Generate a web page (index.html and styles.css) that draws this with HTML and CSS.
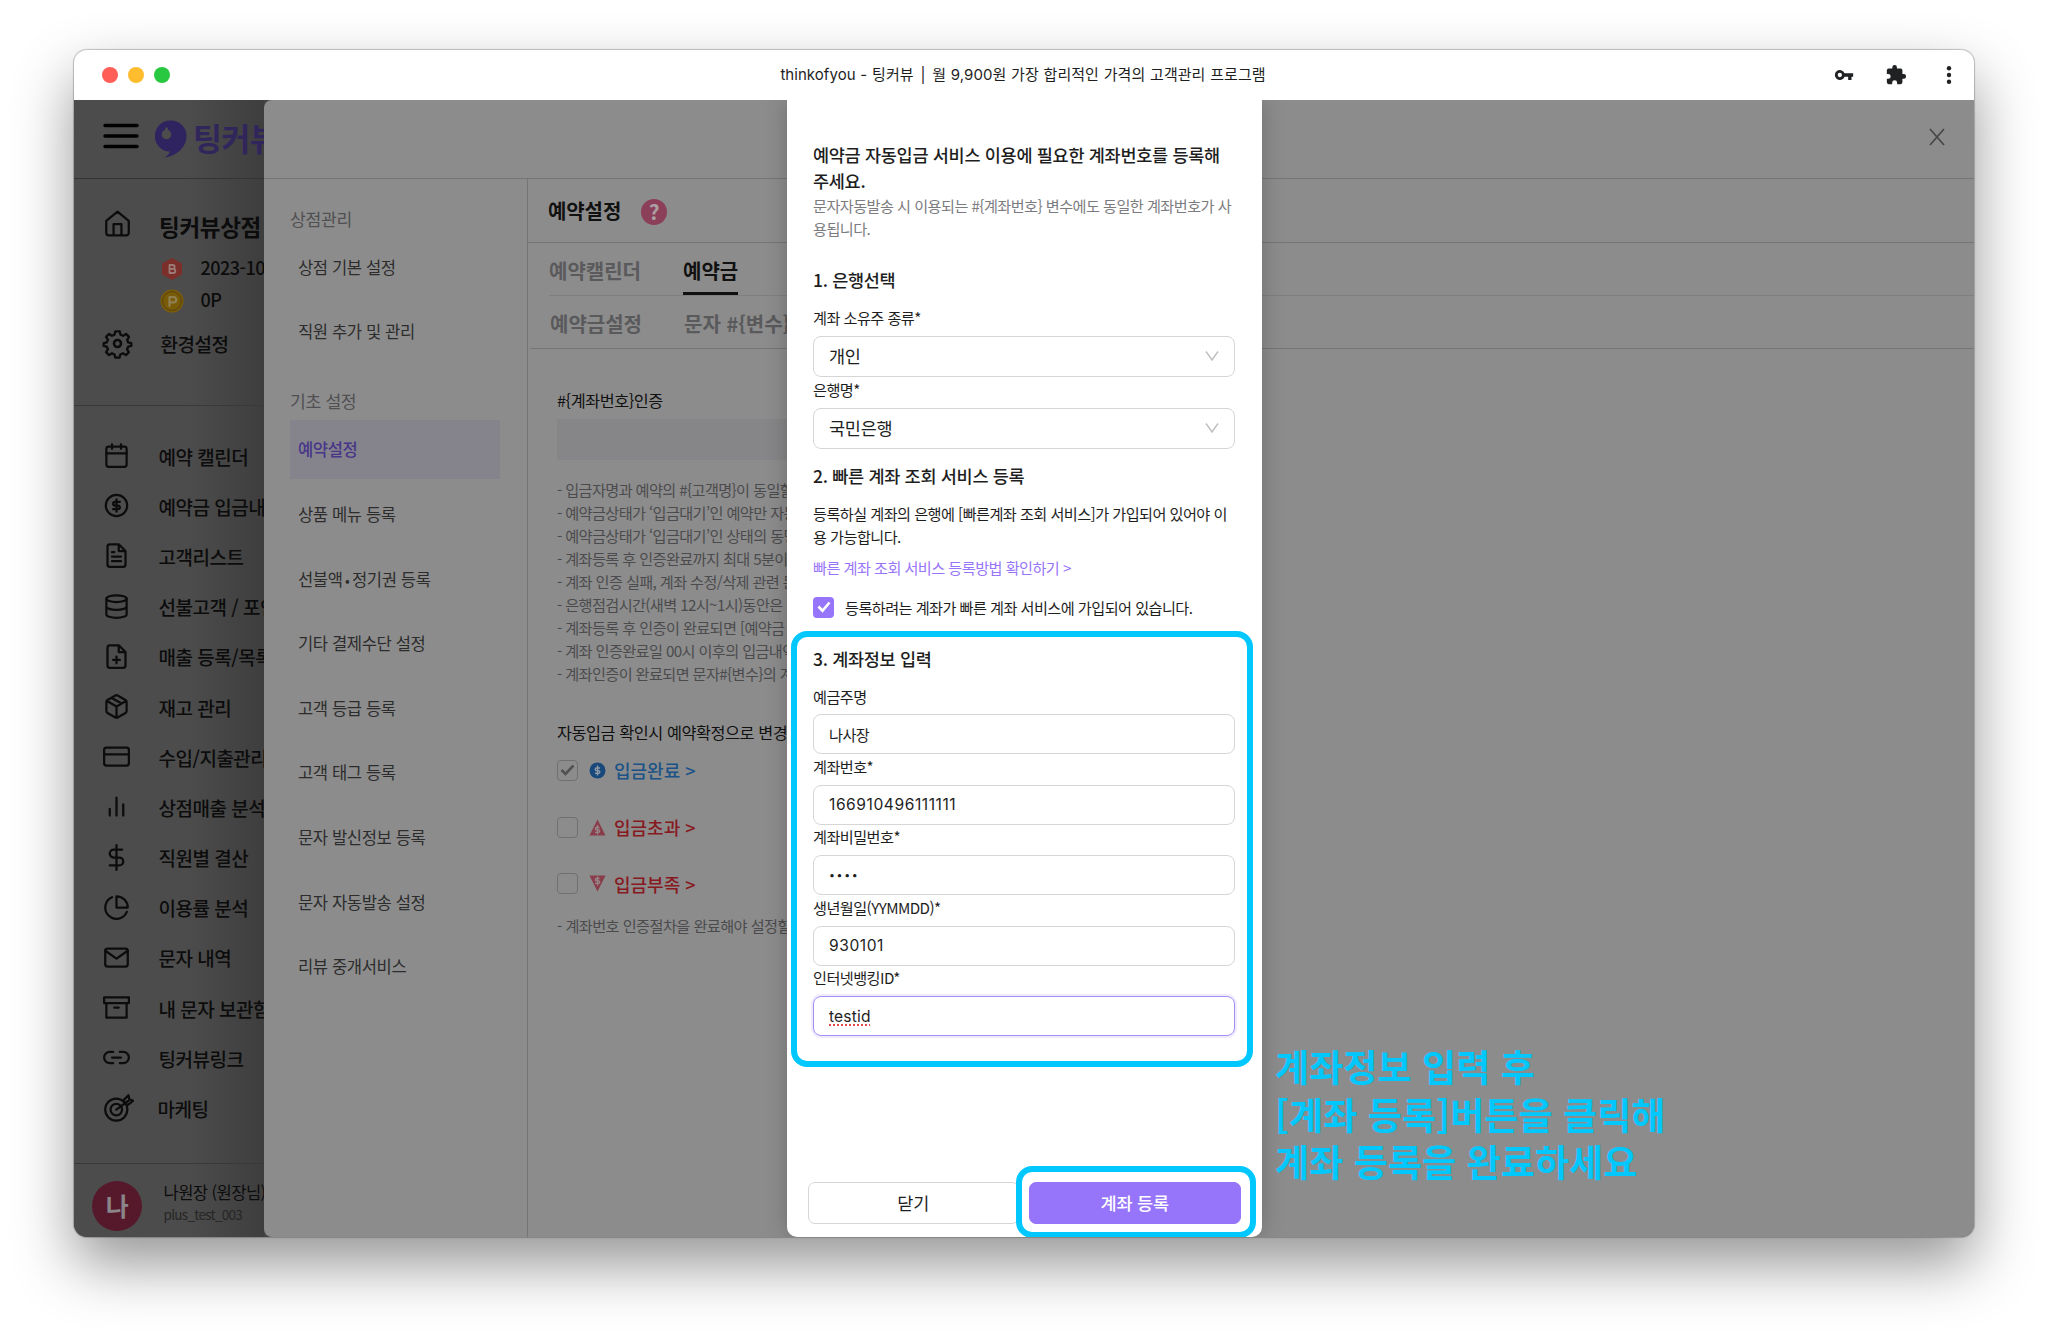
FILE: index.html
```html
<!DOCTYPE html>
<html lang="ko">
<head>
    <meta charset="UTF-8">
    <meta name="viewport" content="width=device-width, initial-scale=1.0">
    <title>thinkofyou - 팅커뷰</title>
    <link rel="stylesheet" href="styles.css">
</head>
<body>
    <div class="window">
        <div class="titlebar">
            <div class="lights">
                <span class="light red"></span>
                <span class="light yellow"></span>
                <span class="light green"></span>
            </div>
            <div class="window-title">thinkofyou - 팅커뷰 <span class="bar">|</span> 월 9,900원 가장 합리적인 가격의 고객관리 프로그램</div>
            <div class="window-tools">
                <svg width="20" height="20" viewBox="0 0 24 24"><path fill="#1f2123" fill-rule="evenodd" d="M12.65 10A6 6 0 1 0 12.65 14H17v4h4v-4h2v-4zM7 14.6a2.6 2.6 0 1 1 0-5.2 2.6 2.6 0 0 1 0 5.2z"/></svg>
                <svg width="22" height="22" viewBox="0 0 24 24"><path fill="#1f2123" d="M20.5 11H19V7a2 2 0 0 0-2-2h-4V3.500a2.500 2.500 0 0 0-5 0V5H4a2 2 0 0 0-2 2v3.800h1.500a2.700 2.700 0 0 1 0 5.400H2V20a2 2 0 0 0 2 2h3.800v-1.500a2.700 2.700 0 0 1 5.400 0V22H17a2 2 0 0 0 2-2v-4h1.500a2.500 2.500 0 0 0 0-5z"/></svg>
                <svg width="6" height="20" viewBox="0 0 6 20"><g fill="#1f2123"><circle cx="3" cy="3.200" r="2.200"/><circle cx="3" cy="10" r="2.200"/><circle cx="3" cy="16.800" r="2.200"/></g></svg>
            </div>
        </div>

        <div class="screen">
            <!-- Menú principal -->
            <aside class="sidebar">
                <div class="brand">
                    <svg class="burger" width="36" height="26" viewBox="0 0 36 26"><path d="M2 2.500h32M2 13h32M2 23.500h32" stroke="#000" stroke-width="3.400" stroke-linecap="round"/></svg>
                    <svg class="brand-mark" width="32" height="38" viewBox="0 0 32 38"><path fill="#2f2360" d="M16 0.500a15.500 15.500 0 0 1 15.500 15.500C31.500 27 22 36 9.500 37.500c3.500-2 5-4 5-6A15.500 15.500 0 0 1 16 0.500z"/><circle cx="11.500" cy="14.500" r="4.800" fill="#4c4c4c"/><circle cx="11.500" cy="8.800" r="1.500" fill="#4c4c4c"/></svg>
                    <span class="brand-name">팅커뷰</span>
                </div>
                <div class="shop">
                    <div class="shop-row shop-top">
                        <svg width="27" height="27" viewBox="0 0 24 24"><path d="M2 9.700L12 1.500l10 8.200v10.600a2.200 2.200 0 0 1-2.200 2.200H4.200A2.200 2.200 0 0 1 2 20.300zM8.500 22v-9.500h7V22"/></svg>
                        <strong>팅커뷰상점</strong>
                    </div>
                    <div class="shop-info">
                        <svg width="24" height="24" viewBox="0 0 24 24"><path class="solid" fill="#7c2f2a" d="M12 1l10 5.500v11L12 23 2 17.500v-11z"/><path d="M9.500 8h3.200a1.900 1.900 0 0 1 0 3.800H9.500zM9.500 11.800h3.700a2 2 0 0 1 0 4.200H9.500z" stroke="#9b7c78" stroke-width="1.800"/></svg>
                        <span>2023-10</span>
                    </div>
                    <div class="shop-info">
                        <svg width="24" height="24" viewBox="0 0 24 24"><circle class="solid" cx="12" cy="12" r="11.500" fill="#7a5c08"/><circle cx="12" cy="12" r="9.400" stroke="#55420f" stroke-width="1"/><path d="M9.500 17V8h4a2.700 2.700 0 0 1 0 5.400h-4" stroke="#8f8052" stroke-width="2.200"/></svg>
                        <span>0P</span>
                    </div>
                    <div class="shop-row shop-config">
                        <svg width="31" height="31" viewBox="0 0 24 24"><circle cx="12" cy="12" r="2.700"/><path d="M10.300 2.600h3.400l.6 2.500 2 .9 2.300-1.400 2.300 2.300L19.500 9.200l.8 2 2.400.5v2.200l-2.400.6-.9 2 1.400 2.300-2.300 2.200-2.300-1.400-2 .9-.6 2.400h-3.300l-.6-2.400-2-.9-2.200 1.400-2.300-2.300 1.400-2.300-.9-1.900-2.400-.6v-2.200l2.400-.6.9-2-1.400-2.300L5.500 4.600 7.700 6l2-.9z" stroke-width="1.800"/></svg>
                        <span>환경설정</span>
                    </div>
                </div>
                <ul class="menu">
                    <li><svg viewBox="0 0 24 24"><rect x="3" y="4" width="18" height="18" rx="2"/><path d="M16 2v4M8 2v4M3 10h18"/></svg>예약 캘린더</li>
                    <li><svg viewBox="0 0 24 24"><circle cx="12" cy="12" r="9.500"/><path d="M15 8.700h-4.300a1.650 1.650 0 0 0 0 3.300h2.600a1.650 1.650 0 0 1 0 3.300H9M12 6.500v11"/></svg>예약금 입금내</li>
                    <li><svg viewBox="0 0 24 24"><path d="M14 2H6a2 2 0 0 0-2 2v16a2 2 0 0 0 2 2h12a2 2 0 0 0 2-2V8zM14 2v6h6M16 13H8M16 17H8M10 9H8"/></svg>고객리스트</li>
                    <li><svg viewBox="0 0 24 24"><ellipse cx="12" cy="5" rx="9" ry="3"/><path d="M21 12c0 1.660-4 3-9 3s-9-1.340-9-3M3 5v14c0 1.660 4 3 9 3s9-1.340 9-3V5"/></svg>선불고객 / 포인</li>
                    <li><svg viewBox="0 0 24 24"><path d="M14 2H6a2 2 0 0 0-2 2v16a2 2 0 0 0 2 2h12a2 2 0 0 0 2-2V8zM14 2v6h6M12 18v-6M9 15h6"/></svg>매출 등록/목록</li>
                    <li><svg viewBox="0 0 24 24"><path d="M16.500 9.400l-9-5.190M21 16V8a2 2 0 0 0-1-1.730l-7-4a2 2 0 0 0-2 0l-7 4A2 2 0 0 0 3 8v8a2 2 0 0 0 1 1.730l7 4a2 2 0 0 0 2 0l7-4A2 2 0 0 0 21 16zM3.270 6.960L12 12.010l8.730-5.050M12 22.080V12"/></svg>재고 관리</li>
                    <li><svg viewBox="0 0 24 24"><rect x="1" y="4" width="22" height="16" rx="2"/><path d="M1 10h22"/></svg>수입/지출관리</li>
                    <li><svg viewBox="0 0 24 24"><path d="M18 20V10M12 20V4M6 20v-6"/></svg>상점매출 분석</li>
                    <li><svg viewBox="0 0 24 24"><path d="M12 1v22M17 5H9.500a3.500 3.500 0 0 0 0 7h5a3.500 3.500 0 0 1 0 7H6"/></svg>직원별 결산</li>
                    <li><svg viewBox="0 0 24 24"><path d="M21.210 15.890A10 10 0 1 1 8 2.830M22 12A10 10 0 0 0 12 2v10z"/></svg>이용률 분석</li>
                    <li><svg viewBox="0 0 24 24"><rect x="2" y="4" width="20" height="16" rx="2"/><path d="M22 6l-10 7L2 6"/></svg>문자 내역</li>
                    <li><svg viewBox="0 0 24 24"><path d="M21 8v13H3V8M1 3h22v5H1zM10 12h4"/></svg>내 문자 보관함</li>
                    <li><svg viewBox="0 0 24 24"><path d="M15 7h3a5 5 0 0 1 0 10h-3M9 17H6A5 5 0 0 1 6 7h3M8 12h8"/></svg>팅커뷰링크</li>
                    <li class="marketing"><svg class="target" viewBox="0 0 28 26"><circle cx="12" cy="14" r="10"/><circle cx="12" cy="14" r="5.200"/><path d="M12 14L23 6M19 8.500V5l4-4 .8 3.600L27.300 6l-4.500 3.500z"/></svg>마케팅</li>
                </ul>
                <div class="profile">
                    <div class="avatar">나</div>
                    <div class="profile-text">
                        <div class="profile-name">나원장 (원장님)</div>
                        <div class="profile-id">plus_test_003</div>
                    </div>
                </div>
            </aside>

            <!-- Panel de configuración -->
            <div class="drawer">
                <div class="drawer-head">
                    <svg width="16" height="18" viewBox="0 0 16 18"><path d="M1 1l14 16M15 1L1 17" stroke="#474747" stroke-width="1.700"/></svg>
                </div>
                <div class="drawer-body">
                    <nav class="subnav">
                        <div class="subnav-title">상점관리</div>
                        <div class="subnav-item">상점 기본 설정</div>
                        <div class="subnav-item">직원 추가 및 관리</div>
                        <div class="subnav-title second">기초 설정</div>
                        <div class="subnav-item active">예약설정</div>
                        <div class="subnav-item">상품 메뉴 등록</div>
                        <div class="subnav-item">선불액<span class="dot">•</span>정기권 등록</div>
                        <div class="subnav-item">기타 결제수단 설정</div>
                        <div class="subnav-item">고객 등급 등록</div>
                        <div class="subnav-item">고객 태그 등록</div>
                        <div class="subnav-item">문자 발신정보 등록</div>
                        <div class="subnav-item">문자 자동발송 설정</div>
                        <div class="subnav-item">리뷰 중개서비스</div>
                    </nav>
                    <main class="content">
                        <div class="page-title">예약설정 <span class="help">?</span></div>
                        <div class="tabs">
                            <span class="tab">예약캘린더</span>
                            <span class="tab selected">예약금</span>
                        </div>
                        <div class="tabs sub">
                            <span class="tab">예약금설정</span>
                            <span class="tab">문자 #{변수}</span>
                        </div>
                        <div class="settings">
                            <div class="settings-title">#{계좌번호}인증</div>
                            <div class="account-box"></div>
                            <ul class="notes">
                                <li>- 입금자명과 예약의 #{고객명}이 동일할</li>
                                <li>- 예약금상태가 ‘입금대기’인 예약만 자동</li>
                                <li>- 예약금상태가 ‘입금대기’인 상태의 동명</li>
                                <li>- 계좌등록 후 인증완료까지 최대 5분이</li>
                                <li>- 계좌 인증 실패, 계좌 수정/삭제 관련 문</li>
                                <li>- 은행점검시간(새벽 12시~1시)동안은</li>
                                <li>- 계좌등록 후 인증이 완료되면 [예약금</li>
                                <li>- 계좌 인증완료일 00시 이후의 입금내역</li>
                                <li>- 계좌인증이 완료되면 문자#{변수}의 계</li>
                            </ul>
                            <div class="settings-title auto">자동입금 확인시 예약확정으로 변경</div>
                            <div class="option blue">
                                <span class="box"><svg width="15" height="12" viewBox="0 0 15 12"><path d="M1.500 6l4 4L13.500 1.500" stroke="#515151" stroke-width="2.600"/></svg></span>
                                <svg width="17" height="17" viewBox="0 0 17 17"><circle cx="8.500" cy="8.500" r="8" fill="#19497c"/><path d="M11 6H7.500a1.300 1.300 0 0 0 0 2.600h2a1.300 1.300 0 0 1 0 2.600H6M8.500 3.500v10" stroke="#8f9aa6" stroke-width="1.400"/></svg>
                                입금완료 &gt;
                            </div>
                            <div class="option red-text">
                                <span class="box"></span>
                                <svg width="17" height="17" viewBox="0 0 17 17"><path d="M8.500 0.500L16.500 16.500H0.500z" fill="#893c4a"/><path d="M10.500 8.500h-3a1.200 1.200 0 0 0 0 2.400h2a1.200 1.200 0 0 1 0 2.400H6M8.500 6v9.500" stroke="#97868a" stroke-width="1.300"/></svg>
                                입금초과 &gt;
                            </div>
                            <div class="option red-text">
                                <span class="box"></span>
                                <svg width="17" height="17" viewBox="0 0 17 17"><path d="M8.500 16.500L0.500 0.500h16z" fill="#893c4a"/><path d="M10.500 3.500h-3a1.200 1.200 0 0 0 0 2.400h2a1.200 1.200 0 0 1 0 2.400H6M8.500 1.500v9" stroke="#97868a" stroke-width="1.300"/></svg>
                                입금부족 &gt;
                            </div>
                            <div class="last-note">- 계좌번호 인증절차을 완료해야 설정할</div>
                        </div>
                    </main>
                </div>
            </div>

            <!-- Ventana de registro de cuenta -->
            <div class="modal">
                <h2>예약금 자동입금 서비스 이용에 필요한 계좌번호를 등록해<br>주세요.</h2>
                <p class="desc">문자자동발송 시 이용되는 #{계좌번호} 변수에도 동일한 계좌번호가 사<br>용됩니다.</p>

                <h3>1. 은행선택</h3>
                <div class="label">계좌 소유주 종류*</div>
                <div class="field select">개인 <svg width="14" height="10" viewBox="0 0 14 10"><path d="M1 0.500l6 8.500 6-8.500" stroke="#bdbdbd" stroke-width="1.400"/></svg></div>
                <div class="label">은행명*</div>
                <div class="field select">국민은행 <svg width="14" height="10" viewBox="0 0 14 10"><path d="M1 0.500l6 8.500 6-8.500" stroke="#bdbdbd" stroke-width="1.400"/></svg></div>

                <h3 class="quick">2. 빠른 계좌 조회 서비스 등록</h3>
                <p class="text">등록하실 계좌의 은행에 [빠른계좌 조회 서비스]가 가입되어 있어야 이<br>용 가능합니다.</p>
                <a class="link">빠른 계좌 조회 서비스 등록방법 확인하기 &gt;</a>
                <div class="agree">
                    <span class="checked"><svg width="14" height="12" viewBox="0 0 14 12"><path d="M1.500 5.500l4 4.300L12.500 1.500" stroke="#fff" stroke-width="2.700"/></svg></span>
                    등록하려는 계좌가 빠른 계좌 서비스에 가입되어 있습니다.
                </div>

                <h3 class="info">3. 계좌정보 입력</h3>
                <div class="label">예금주명</div>
                <div class="field">나사장</div>
                <div class="label">계좌번호*</div>
                <div class="field latin">166910496111111</div>
                <div class="label">계좌비밀번호*</div>
                <div class="field dots">••••</div>
                <div class="label">생년월일(YYMMDD)*</div>
                <div class="field latin">930101</div>
                <div class="label">인터넷뱅킹ID*</div>
                <div class="field latin focus"><span class="typo">testid</span></div>

                <div class="actions">
                    <div class="btn">닫기</div>
                    <div class="btn primary">계좌 등록</div>
                </div>
            </div>

            <div class="mark mark-form"></div>
            <div class="mark mark-button"></div>
            <div class="guide">계좌정보 입력 후<br>[계좌 등록]버튼을 클릭해<br>계좌 등록을 완료하세요</div>
        </div>
    </div>
</body>
</html>
```
FILE: styles.css
```css
* {
    box-sizing: border-box;
}

body {
    margin: 0;
    padding: 50px 74px 0;
    height: 1335px;
    overflow: hidden;
    background: #fff;
    font-family: "Noto Sans CJK KR", sans-serif;
    font-size: 15.2px;
    letter-spacing: -0.57px;
    color: #1e1e1e;
}

svg {
    flex: none;
    fill: none;
}

ul {
    list-style: none;
    margin: 0;
    padding: 0;
}

.window {
    width: 1900px;
    height: 1187px;
    border-radius: 13px;
    background: #fff;
    box-shadow: 0 0 1px 1px rgba(0, 0, 0, 0.22), 0 27px 60px rgba(0, 0, 0, 0.42);
}

.titlebar {
    height: 50px;
    display: grid;
    grid-template-columns: 1fr auto 1fr;
    align-items: center;
}

.lights {
    display: flex;
    gap: 10.4px;
    padding-left: 27.5px;
}

.light {
    width: 16px;
    height: 16px;
    border-radius: 50%;
}

.red { background: #ff5f57; }
.yellow { background: #febc2e; }
.green { background: #28c840; }

.window-title {
    padding: 0 2px 3px 0;
    font-family: Inter, "Noto Sans CJK KR", sans-serif;
    font-size: 15px;
    letter-spacing: 0.05px;
    word-spacing: 0.5px;
}

.bar {
    margin: 0 2px;
}

.window-tools {
    display: flex;
    justify-content: flex-end;
    align-items: center;
    gap: 31px;
    padding-right: 22px;
}

.window-tools svg:last-child {
    margin-left: 8px;
}

.screen {
    position: relative;
    display: flex;
    height: 1137px;
    overflow: hidden;
    border-radius: 0 0 13px 13px;
    background: #444;
}

/* Menú principal */
.sidebar {
    flex: none;
    width: 190px;
    overflow: hidden;
    white-space: nowrap;
    background: linear-gradient(90deg, #4c4c4c 60%, #3e3e3e);
    font-size: 19px;
    font-weight: 500;
    letter-spacing: -0.5px;
    color: #0c0c0c;
}

.sidebar svg {
    stroke: #0c0c0c;
    stroke-width: 2;
    stroke-linecap: round;
    stroke-linejoin: round;
}

.sidebar svg .solid {
    stroke: none;
}

.brand {
    display: flex;
    height: 79px;
    padding: 20px 0 0 29px;
    border-bottom: 1px solid #343434;
}

.sidebar .burger {
    margin-top: 3px;
}

.sidebar .brand-mark {
    margin-left: 16px;
    stroke: none;
}

.brand-name {
    margin-left: 6px;
    line-height: 35px;
    font-size: 31.5px;
    font-weight: 700;
    color: #30265c;
}

.shop {
    height: 227px;
    padding-top: 19px;
    border-bottom: 1px solid #393939;
}

.shop-row {
    display: flex;
    align-items: center;
}

.shop-top {
    height: 55px;
    padding: 0 0 5px 30px;
    gap: 28px;
}

.shop-top strong {
    padding-top: 5px;
    font-size: 22.5px;
    letter-spacing: -0.3px;
}

.shop-info {
    display: flex;
    align-items: center;
    height: 32px;
    padding-left: 85.5px;
    gap: 17px;
    font-size: 18px;
}

.shop-info span {
    margin-top: -4px;
}

.shop-config {
    padding-left: 27.5px;
    margin-top: 11px;
    gap: 28px;
}

.menu {
    height: 757px;
    padding-top: 25px;
}

.menu li {
    display: flex;
    align-items: center;
    gap: 29px;
    height: 50.2px;
    padding-left: 28.5px;
}

.menu svg {
    width: 27px;
    height: 27px;
    margin-top: -1px;
}

.menu .marketing {
    gap: 24px;
}

.menu .target {
    width: 31px;
    height: 29px;
}

.profile {
    display: flex;
    align-items: center;
    gap: 21.5px;
    height: 74px;
    padding: 10px 0 0 18px;
    border-top: 1px solid #393939;
}

.avatar {
    flex: none;
    width: 50px;
    height: 50px;
    border-radius: 50%;
    background: #56192c;
    color: #8b8488;
    font-size: 25px;
    font-weight: 700;
    line-height: 48px;
    text-align: center;
}

.profile-text {
    line-height: 22px;
    margin-top: -5px;
}

.profile-name {
    font-size: 16.6px;
    font-weight: 400;
    letter-spacing: -0.6px;
}

.profile-id {
    font-size: 13.5px;
    font-weight: 400;
    letter-spacing: -0.7px;
    color: #262626;
}

/* Panel de configuración */
.drawer {
    flex: 1;
    display: flex;
    flex-direction: column;
    border-radius: 8px 0 0 8px;
    background: #8c8c8c;
}

.drawer-head {
    display: flex;
    justify-content: flex-end;
    height: 79px;
    padding: 28px 29.5px 0 0;
    border-bottom: 1.5px solid #757575;
}

.drawer-body {
    flex: 1;
    display: flex;
}

.subnav {
    width: 264px;
    padding: 22px 27px 0 26px;
    border-right: 1.5px solid #757575;
    font-size: 16.6px;
    letter-spacing: -0.4px;
    color: #2c2c2d;
}

.subnav-title {
    height: 36px;
    margin-bottom: 0.8px;
    line-height: 36px;
    font-size: 17.2px;
    letter-spacing: -0.35px;
    color: #505052;
}

.subnav-title.second {
    margin-top: 22px;
}

.subnav-item {
    height: 59px;
    margin-bottom: 5.65px;
    padding-left: 8px;
    line-height: 58px;
}

.dot {
    margin: 0 2.5px;
    font-size: 14px;
}

.active {
    background: #85838b;
    color: #47368a;
    font-weight: 500;
}

.content {
    flex: 1;
}

.page-title {
    display: flex;
    align-items: center;
    gap: 20px;
    height: 63.5px;
    padding-left: 20px;
    border-bottom: 1.5px solid #757575;
    font-size: 20px;
    font-weight: 700;
    letter-spacing: -0.1px;
    color: #111;
}

.help {
    width: 26px;
    height: 26px;
    margin-top: 4px;
    border-radius: 50%;
    background: #8c3f58;
    color: #aaa0a4;
    font-size: 21px;
    line-height: 25px;
    text-align: center;
}

.tabs {
    display: flex;
    gap: 42px;
    height: 53px;
    margin-left: 21px;
    border-bottom: 1px solid #7f7f7f;
    font-size: 20px;
    font-weight: 700;
    letter-spacing: 0;
    line-height: 56px;
    color: #5a5a5c;
}

.tab.selected {
    border-bottom: 3px solid #111;
    color: #111;
}

.tabs.sub {
    margin-left: 2px;
    padding-left: 20px;
    border-bottom: 1.5px solid #757575;
}

.settings {
    width: 440px;
    padding: 39.5px 0 0 29px;
    white-space: nowrap;
    color: #4b4b4d;
}

.settings-title {
    line-height: 24px;
    font-size: 16.3px;
    letter-spacing: -0.45px;
    color: #111;
}

.account-box {
    height: 41px;
    margin-top: 7px;
    background: #868688;
}

.notes {
    margin-top: 17.5px;
    line-height: 23.1px;
    letter-spacing: -0.63px;
}

.auto {
    margin: 34.5px 0 16px;
}

.option {
    display: flex;
    align-items: center;
    gap: 8px;
    height: 21px;
    margin-bottom: 35.7px;
    font-size: 18px;
    font-weight: 500;
    letter-spacing: 0;
}

.blue {
    color: #1b5388;
}

.red-text {
    color: #87191f;
}

.box {
    display: flex;
    align-items: center;
    justify-content: center;
    width: 21px;
    height: 21px;
    margin-right: 3px;
    border: 1.5px solid #707070;
    border-radius: 4px;
}

.last-note {
    margin-top: -15.5px;
    line-height: 23px;
}

/* Ventana de registro */
.modal {
    position: absolute;
    top: 0;
    left: 712.5px;
    width: 475.5px;
    height: 1137px;
    display: flex;
    flex-direction: column;
    padding: 42px 27px 13px 26.5px;
    border-radius: 0 0 10px 10px;
    background: #fff;
    box-shadow: 0 0 22px rgba(0, 0, 0, 0.22);
    white-space: nowrap;
    line-height: 23px;
}

.modal h2,
.modal h3 {
    margin: 0;
    font-size: 17.5px;
    font-weight: 500;
    line-height: 26.4px;
    letter-spacing: -0.3px;
}

.modal h3 {
    margin: 27px 0 12.5px;
    line-height: 26px;
}

.modal h3.quick {
    margin: 13.5px 0;
}

.modal h3.info {
    margin-top: 28px;
}

.modal p {
    margin: 0;
}

.modal .desc {
    margin-top: -1px;
    color: #7c7c80;
}

.label {
    height: 30.4px;
    padding-top: 0.5px;
}

.field {
    display: flex;
    align-items: center;
    height: 40px;
    padding: 0 15px;
    border: 1px solid #d6d6d6;
    border-radius: 8px;
}

.field.select {
    justify-content: space-between;
    height: 41.5px;
    padding-bottom: 1px;
    font-size: 17.5px;
    letter-spacing: -0.25px;
}

.field.latin {
    font-family: Inter, sans-serif;
    font-size: 15.6px;
    letter-spacing: 0.55px;
}

.field.dots {
    font-family: Inter, sans-serif;
    font-size: 10.5px;
    letter-spacing: 1.7px;
}

.field.focus {
    letter-spacing: 0.15px;
    border-color: #a48ff5;
    box-shadow: 0 0 0 2px rgba(151, 117, 250, 0.15);
}

.typo {
    text-decoration: underline dotted #e5484d 2px;
    text-underline-offset: 3px;
}

.link {
    margin-top: 8px;
    color: #9775fa;
}

.agree {
    display: flex;
    align-items: center;
    gap: 11px;
    height: 21px;
    margin-top: 17.5px;
}

.checked {
    display: flex;
    align-items: center;
    justify-content: center;
    width: 21px;
    height: 21px;
    border-radius: 4px;
    background: #9775fa;
}

.actions {
    display: flex;
    gap: 10px;
    margin: auto -5.5px 0;
}

.btn {
    flex: 1;
    height: 42px;
    border: 1px solid #d6d6d6;
    border-radius: 7px;
    font-size: 17.5px;
    line-height: 39px;
    letter-spacing: -0.2px;
    text-align: center;
}

.btn.primary {
    border-color: #9775fa;
    background: #9775fa;
    color: #fff;
    font-weight: 500;
}

/* Marcas y texto de la guía */
.mark {
    position: absolute;
    border: 6.5px solid #00c8ff;
    border-radius: 16px;
}

.mark-form {
    left: 716.5px;
    top: 531px;
    width: 462.5px;
    height: 436px;
}

.mark-button {
    left: 941.5px;
    top: 1066px;
    width: 240.5px;
    height: 72px;
}

.guide {
    position: absolute;
    left: 1201px;
    top: 943px;
    font-size: 37px;
    font-weight: 700;
    line-height: 47.6px;
    letter-spacing: 0.1px;
    white-space: nowrap;
    color: #00c8ff;
}
```
